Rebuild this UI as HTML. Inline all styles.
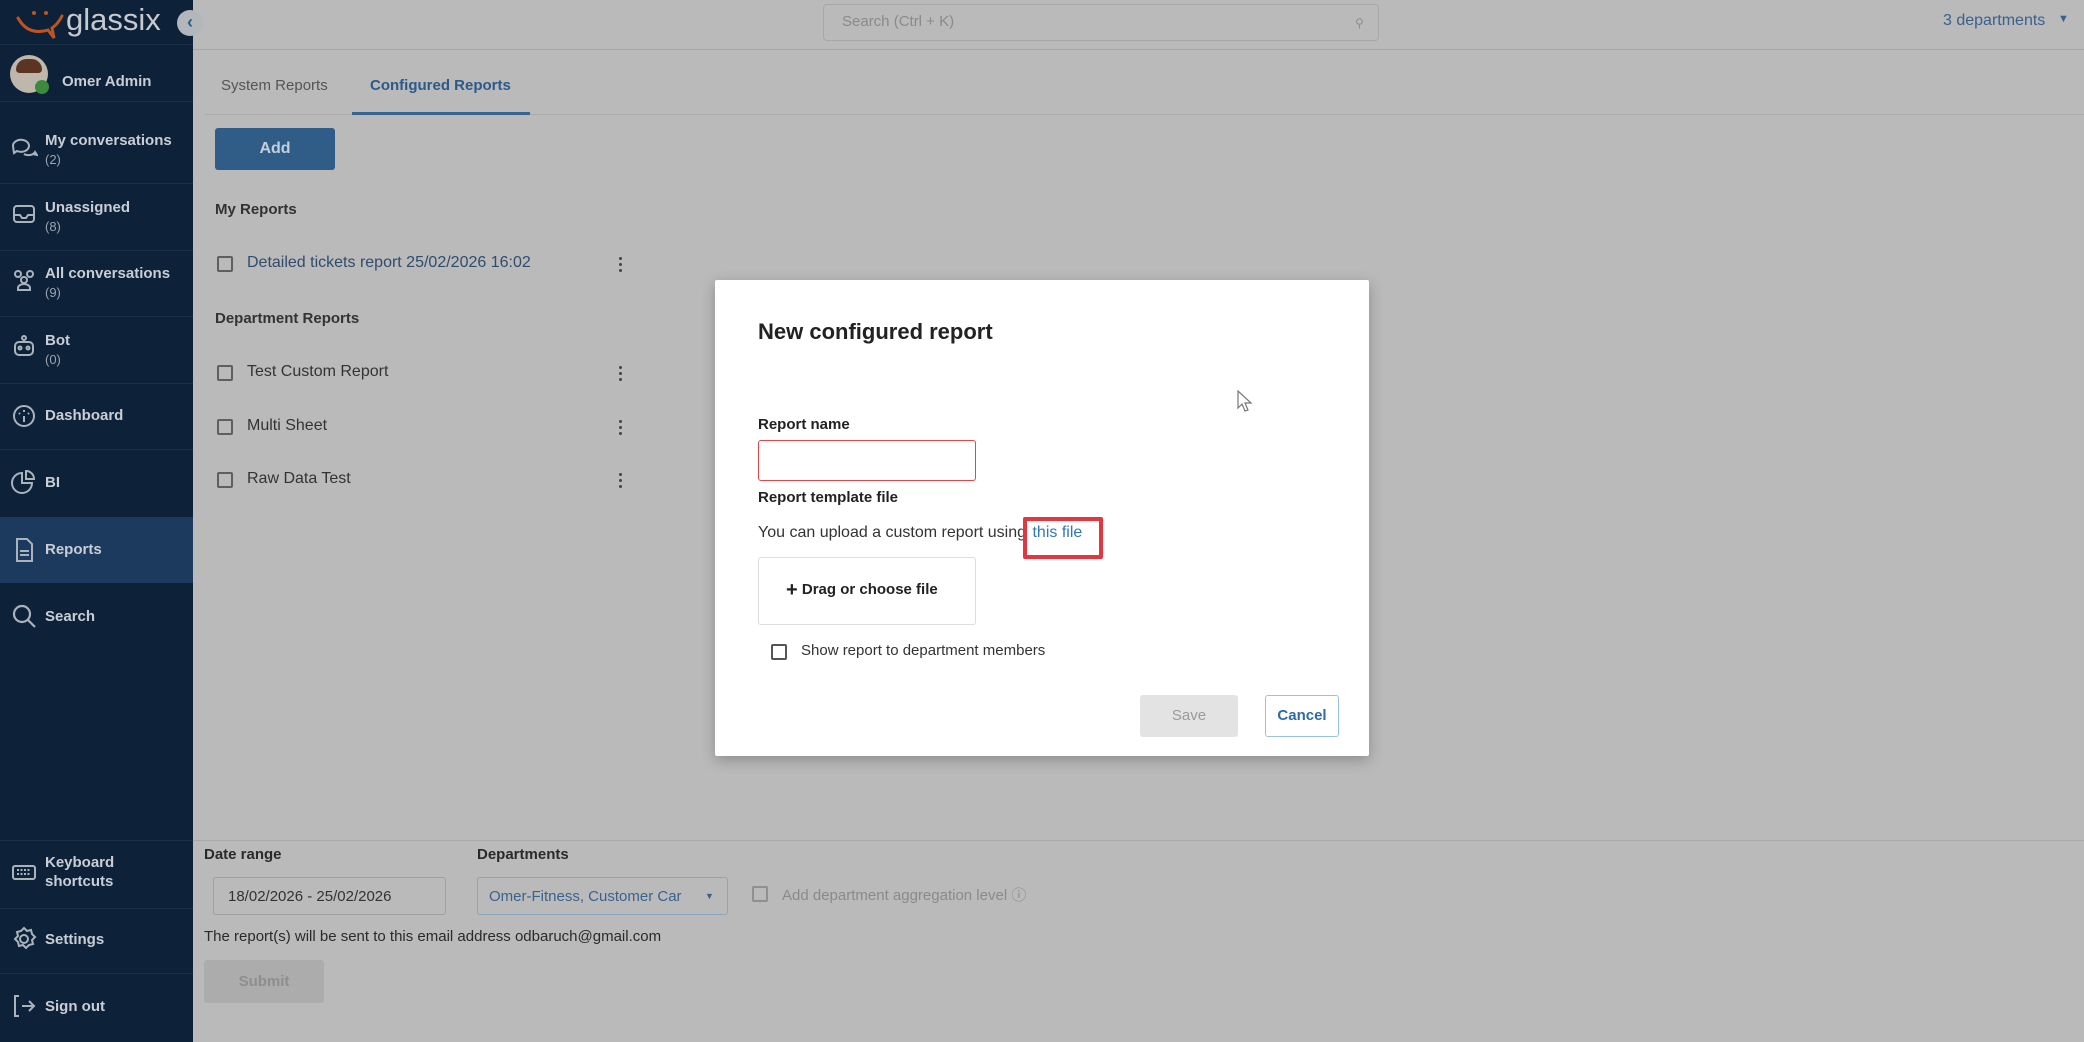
<!DOCTYPE html>
<html><head><meta charset="utf-8"><style>
*{box-sizing:border-box;margin:0;padding:0}
body{width:2084px;height:1042px;overflow:hidden;background:#bababa;font-family:"Liberation Sans",sans-serif;position:relative;color:#2a2a2a}
.a{position:absolute;white-space:nowrap}
#sb{position:absolute;left:0;top:0;width:193px;height:1042px;background:#0d2239}
.sd{position:absolute;left:0;width:193px;height:1px;background:#1b3048}
.si{position:absolute;left:45px;color:#c9ced6;font-size:15px;font-weight:bold;line-height:19px}
.si small{display:block;font-weight:normal;font-size:13px;color:#9aa3ae}
.ic{position:absolute;left:10px;width:28px;height:28px}
.cb{position:absolute;width:16px;height:16px;border:2px solid #5f5f5f;border-radius:2px}
.k{position:absolute;width:4px;height:18px}
.k i{display:block;width:3px;height:3px;background:#444;border-radius:50%;margin:0 0 3px 0}
</style></head><body>
<div id="sb">
 <svg class="a" style="left:14px;top:6px" width="52" height="34" viewBox="0 0 52 34"><path d="M4 12 Q14 30 34 24 L40 32 L38 22 Q44 18 48 10" fill="none" stroke="#c0531f" stroke-width="3" stroke-linecap="round"/><circle cx="20" cy="7" r="2" fill="#c0531f"/><circle cx="32" cy="7" r="2" fill="#c0531f"/></svg>
 <div class="a" style="left:66px;top:2px;font-size:31px;color:#c6c9cf">glassix</div>
 <div class="a" style="left:177px;top:10px;width:26px;height:26px;border-radius:50%;background:#b3b6ba;color:#2a5d8f;font-size:18px;text-align:center;line-height:25px;font-weight:bold">‹</div>
 <div class="sd" style="top:44px"></div>
 <div class="a" style="left:10px;top:55px;width:38px;height:38px;border-radius:50%;background:#bfb6ac"></div>
 <div class="a" style="left:16px;top:59px;width:26px;height:14px;border-radius:12px 12px 4px 4px;background:#5b3424"></div>
 <div class="a" style="left:35px;top:80px;width:14px;height:14px;border-radius:50%;background:#3e8a3d"></div>
 <div class="a" style="left:62px;top:73px;font-size:15px;color:#c9ced6;font-weight:bold">Omer Admin</div>
 <div class="sd" style="top:101px"></div>
 <svg class="ic" style="top:134px" viewBox="0 0 28 28" fill="none" stroke="#aab2bc" stroke-width="2"><path d="M3 12 a8 6 0 1 1 4 5 l-3 2z"/><path d="M14 20 a7 5 0 0 0 11 -2 l2 3 -4 -1"/></svg>
 <div class="si" style="top:131px">My conversations<small>(2)</small></div>
 <div class="sd" style="top:183px"></div>
 <svg class="ic" style="top:200px" viewBox="0 0 28 28" fill="none" stroke="#aab2bc" stroke-width="2"><rect x="4" y="6" width="20" height="16" rx="3"/><path d="M4 15h6l2 3h4l2-3h6"/></svg>
 <div class="si" style="top:198px">Unassigned<small>(8)</small></div>
 <div class="sd" style="top:250px"></div>
 <svg class="ic" style="top:266px" viewBox="0 0 28 28" fill="none" stroke="#aab2bc" stroke-width="2"><circle cx="8" cy="8" r="3"/><circle cx="20" cy="8" r="3"/><circle cx="14" cy="14" r="3"/><path d="M8 24v-2a6 4 0 0 1 12 0v2z"/></svg>
 <div class="si" style="top:264px">All conversations<small>(9)</small></div>
 <div class="sd" style="top:316px"></div>
 <svg class="ic" style="top:333px" viewBox="0 0 28 28" fill="none" stroke="#aab2bc" stroke-width="2"><rect x="5" y="9" width="18" height="13" rx="4"/><circle cx="14" cy="5" r="2"/><circle cx="10" cy="15" r="1.5"/><circle cx="18" cy="15" r="1.5"/></svg>
 <div class="si" style="top:331px">Bot<small>(0)</small></div>
 <div class="sd" style="top:383px"></div>
 <svg class="ic" style="top:402px" viewBox="0 0 28 28" fill="none" stroke="#aab2bc" stroke-width="2"><circle cx="14" cy="14" r="10"/><path d="M14 14v6M14 8v2M9 11l1 1M19 11l-1 1"/></svg>
 <div class="si" style="top:406px">Dashboard</div>
 <div class="sd" style="top:449px"></div>
 <svg class="ic" style="top:468px" viewBox="0 0 28 28" fill="none" stroke="#aab2bc" stroke-width="2"><path d="M12 5a10 10 0 1 0 10 10H12z"/><path d="M16 3v8h8a8 8 0 0 0-8-8z"/></svg>
 <div class="si" style="top:473px">BI</div>
 <div class="a" style="left:0;top:517px;width:193px;height:66px;background:#1c3a5d"></div>
 <svg class="ic" style="top:536px" viewBox="0 0 28 28" fill="none" stroke="#aab2bc" stroke-width="2"><path d="M7 3h10l5 5v17H7z"/><path d="M10 15h9M10 19h9"/></svg>
 <div class="si" style="top:540px">Reports</div>
 <svg class="ic" style="top:602px" viewBox="0 0 28 28" fill="none" stroke="#aab2bc" stroke-width="2.2"><circle cx="12" cy="12" r="8"/><path d="M18 18l7 7"/></svg>
 <div class="si" style="top:607px">Search</div>
 <div class="sd" style="top:840px"></div>
 <svg class="ic" style="top:858px" viewBox="0 0 28 28" fill="none" stroke="#aab2bc" stroke-width="2"><rect x="3" y="8" width="22" height="13" rx="2"/><path d="M7 12h14M7 16h14" stroke-dasharray="2 1.5"/></svg>
 <div class="si" style="top:853px">Keyboard<br>shortcuts</div>
 <div class="sd" style="top:908px"></div>
 <svg class="ic" style="top:925px" viewBox="0 0 28 28" fill="none" stroke="#aab2bc" stroke-width="2"><circle cx="14" cy="14" r="4"/><path d="M14 3l3 3 4-1 1 4 3 3-3 3 1 4-4 1-3 3-3-3-4 1-1-4-3-3 3-3-1-4 4-1z"/></svg>
 <div class="si" style="top:930px">Settings</div>
 <div class="sd" style="top:973px"></div>
 <svg class="ic" style="top:992px" viewBox="0 0 28 28" fill="none" stroke="#aab2bc" stroke-width="2"><path d="M9 4H5v20h4"/><path d="M12 14h12M19 9l5 5-5 5"/></svg>
 <div class="si" style="top:997px">Sign out</div>
</div>

<div class="a" style="left:193px;top:49px;width:1891px;height:1px;background:#a6a6a6"></div>
<div class="a" style="left:823px;top:4px;width:556px;height:37px;border:1px solid #a8a8a8;border-radius:4px"></div>
<div class="a" style="left:842px;top:13px;font-size:15px;color:#8a8a8a">Search (Ctrl + K)</div>
<div class="a" style="left:1355px;top:16px;font-size:12px;color:#8f8f8f">⚲</div>
<div class="a" style="left:1943px;top:12px;font-size:16px;color:#38618d">3 departments</div>
<div class="a" style="left:2058px;top:13px;font-size:11px;color:#38618d">▼</div>

<div class="a" style="left:221px;top:77px;font-size:15px;color:#555">System Reports</div>
<div class="a" style="left:370px;top:77px;font-size:15px;color:#2b5a8a;font-weight:bold">Configured Reports</div>
<div class="a" style="left:205px;top:114px;width:1879px;height:1px;background:#ababab"></div>
<div class="a" style="left:352px;top:112px;width:178px;height:3px;background:#386590"></div>
<div class="a" style="left:215px;top:128px;width:120px;height:42px;background:#305c88;border-radius:3px;color:#c4cfdc;font-weight:bold;font-size:16px;text-align:center;line-height:42px">Add</div>
<div class="a" style="left:215px;top:201px;font-size:15px;font-weight:bold;color:#333">My Reports</div>
<div class="cb" style="left:217px;top:256px"></div>
<div class="a" style="left:247px;top:254px;font-size:16px;color:#2f4c6c">Detailed tickets report 25/02/2026 16:02</div>
<div class="k" style="left:619px;top:257px"><i></i><i></i><i></i></div>
<div class="a" style="left:215px;top:310px;font-size:15px;font-weight:bold;color:#333">Department Reports</div>
<div class="cb" style="left:217px;top:365px"></div>
<div class="a" style="left:247px;top:363px;font-size:16px;color:#333">Test Custom Report</div>
<div class="k" style="left:619px;top:366px"><i></i><i></i><i></i></div>
<div class="cb" style="left:217px;top:419px"></div>
<div class="a" style="left:247px;top:417px;font-size:16px;color:#333">Multi Sheet</div>
<div class="k" style="left:619px;top:420px"><i></i><i></i><i></i></div>
<div class="cb" style="left:217px;top:472px"></div>
<div class="a" style="left:247px;top:470px;font-size:16px;color:#333">Raw Data Test</div>
<div class="k" style="left:619px;top:473px"><i></i><i></i><i></i></div>

<div class="a" style="left:193px;top:840px;width:1891px;height:1px;background:#a9a9a9"></div>
<div class="a" style="left:204px;top:846px;font-size:15px;font-weight:bold;color:#2a2a2a">Date range</div>
<div class="a" style="left:213px;top:877px;width:233px;height:38px;border:1px solid #a0a0a0;border-radius:3px;font-size:15px;color:#333;padding:10px 14px">18/02/2026 - 25/02/2026</div>
<div class="a" style="left:477px;top:846px;font-size:15px;font-weight:bold;color:#2a2a2a">Departments</div>
<div class="a" style="left:477px;top:877px;width:251px;height:38px;border:1px solid #8aa6c2;border-radius:3px;font-size:15px;color:#3a6290;padding:10px 11px;overflow:hidden">Omer-Fitness, Customer Car</div>
<div class="a" style="left:705px;top:891px;font-size:9px;color:#3a6290">▼</div>
<div class="cb" style="left:752px;top:886px;border-color:#909090"></div>
<div class="a" style="left:782px;top:884px;font-size:15px;color:#8a8a8a">Add department aggregation level ⓘ</div>
<div class="a" style="left:204px;top:928px;font-size:15px;color:#2a2a2a">The report(s) will be sent to this email address odbaruch@gmail.com</div>
<div class="a" style="left:204px;top:960px;width:120px;height:43px;background:#acacac;border-radius:3px;color:#8e8e8e;font-size:15px;font-weight:bold;text-align:center;line-height:43px">Submit</div>

<div class="a" style="left:715px;top:280px;width:654px;height:476px;background:#fff;border-radius:2px;box-shadow:0 4px 14px rgba(0,0,0,0.25)"></div>
<div class="a" style="left:758px;top:319px;font-size:22px;font-weight:bold;color:#222">New configured report</div>
<svg class="a" style="left:1237px;top:390px" width="16" height="24" viewBox="0 0 16 24"><path d="M1 1v17l4-4 3 7 3-1-3-7h6z" fill="#fff" stroke="#777" stroke-width="1.2"/></svg>
<div class="a" style="left:758px;top:416px;font-size:15px;font-weight:bold;color:#222">Report name</div>
<div class="a" style="left:758px;top:440px;width:218px;height:41px;border:1.5px solid #d9494d;border-radius:3px"></div>
<div class="a" style="left:758px;top:489px;font-size:15px;font-weight:bold;color:#222">Report template file</div>
<div class="a" style="left:758px;top:524px;font-size:16px;color:#333">You can upload a custom report using <span style="color:#3377b5;margin-left:2px">this file</span></div>
<div class="a" style="left:1023px;top:517px;width:80px;height:42px;border:4px solid #e1373f;border-radius:2px"></div>
<div class="a" style="left:758px;top:557px;width:218px;height:68px;border:1px solid #ddd;border-radius:3px"></div>
<div class="a" style="left:786px;top:579px;font-size:15px;font-weight:bold;color:#222"><span style="font-size:20px;vertical-align:-2px">+</span> Drag or choose file</div>
<div class="cb" style="left:771px;top:644px;border-color:#555"></div>
<div class="a" style="left:801px;top:642px;font-size:15px;color:#333">Show report to department members</div>
<div class="a" style="left:1140px;top:695px;width:98px;height:42px;background:#e3e3e3;border-radius:3px;color:#9b9b9b;font-size:15px;text-align:center;line-height:42px">Save</div>
<div class="a" style="left:1265px;top:695px;width:74px;height:42px;border:1px solid #9cc1e0;border-radius:3px;color:#2e6aa3;font-weight:bold;font-size:15px;text-align:center;line-height:40px">Cancel</div>
</body></html>
